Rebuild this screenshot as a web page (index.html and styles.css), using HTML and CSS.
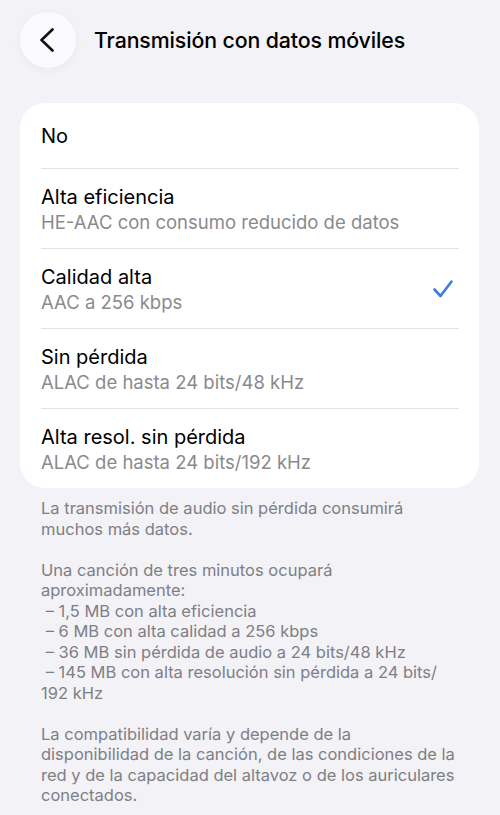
FILE: index.html
```html
<!DOCTYPE html>
<html>
<head>
<title>Transmisión con datos móviles</title>
<link rel="stylesheet" href="styles.css">
</head>
<body>
<div class="header">
  <button class="back" aria-label="Atrás">
    <svg width="16" height="24" viewBox="0 0 16 24">
      <polyline points="13.5,1.5 2.5,12 13.5,22.5" fill="none" stroke="#111" stroke-width="2.6" stroke-linecap="round" stroke-linejoin="round"/>
    </svg>
  </button>
  <h1 class="title">Transmisión con datos móviles</h1>
</div>

<div class="card">
  <div class="row single">
    <div class="row-text">
      <div class="row-title">No</div>
    </div>
  </div>
  <div class="row">
    <div class="row-text">
      <div class="row-title">Alta eficiencia</div>
      <div class="row-sub">HE-AAC con consumo reducido de datos</div>
    </div>
  </div>
  <div class="row">
    <div class="row-text">
      <div class="row-title">Calidad alta</div>
      <div class="row-sub">AAC a 256 kbps</div>
    </div>
    <svg class="check" width="22" height="20" viewBox="0 0 22 20">
      <polyline points="2.5,10.5 8.5,17 19.5,2.5" fill="none" stroke="#3a7ddb" stroke-width="2.6" stroke-linecap="round" stroke-linejoin="round"/>
    </svg>
  </div>
  <div class="row">
    <div class="row-text">
      <div class="row-title">Sin pérdida</div>
      <div class="row-sub">ALAC de hasta 24 bits/48 kHz</div>
    </div>
  </div>
  <div class="row">
    <div class="row-text">
      <div class="row-title">Alta resol. sin pérdida</div>
      <div class="row-sub">ALAC de hasta 24 bits/192 kHz</div>
    </div>
  </div>
</div>

<div class="footer">
  <p>La transmisión de audio sin pérdida consumirá muchos más datos.</p>
  <p>Una canción de tres minutos ocupará aproximadamente:<br>
  &nbsp;– 1,5 MB con alta eficiencia<br>
  &nbsp;– 6 MB con alta calidad a 256 kbps<br>
  &nbsp;– 36 MB sin pérdida de audio a 24 bits/48 kHz<br>
  &nbsp;– 145 MB con alta resolución sin pérdida a 24 bits/<wbr>192 kHz</p>
  <p>La compatibilidad varía y depende de la disponibilidad de la canción, de las condiciones de la red y de la capacidad del altavoz o de los auriculares conectados.</p>
</div>
</body>
</html>
```

FILE: styles.css
```css
body {
  margin: 0;
  background-color: #f2f2f7;
  font-family: Inter, "Noto Sans", sans-serif;
  color: #000;
}

.header {
  display: flex;
  align-items: center;
  padding: 12px 20px 0;
}

.back {
  width: 56px;
  height: 56px;
  border: none;
  border-radius: 50%;
  background-color: #fbfbfd;
  box-shadow: 0 2px 10px rgba(0, 0, 0, 0.04);
  display: flex;
  align-items: center;
  justify-content: center;
  padding: 0 3px 0 0;
  cursor: pointer;
}

.title {
  margin: 0 0 0 18px;
  font-size: 21.3px;
  font-weight: 500;
  letter-spacing: -0.1px;
}

.card {
  margin: 35px 21px 0 20px;
  background-color: #fff;
  border-radius: 25px;
  padding: 0 20px 0 21px;
}

.row {
  display: flex;
  align-items: center;
  height: 80px;
  border-bottom: 1px solid #e3e3e6;
  box-sizing: border-box;
}

.row.single {
  height: 66px;
}

.row:last-child {
  border-bottom: none;
  height: 79px;
}

.row-text {
  flex: 1;
  padding-top: 1px;
}

.row-title {
  font-size: 20px;
  line-height: 25px;
}

.row-sub {
  font-size: 18.5px;
  line-height: 24px;
  color: #8a8a8e;
}

.check {
  margin-right: 5px;
}

.footer {
  padding: 10px 41px 20px;
  font-size: 16.5px;
  line-height: 20.5px;
  color: #7f7f84;
}

.footer p {
  margin: 0 0 20.5px;
}
```
